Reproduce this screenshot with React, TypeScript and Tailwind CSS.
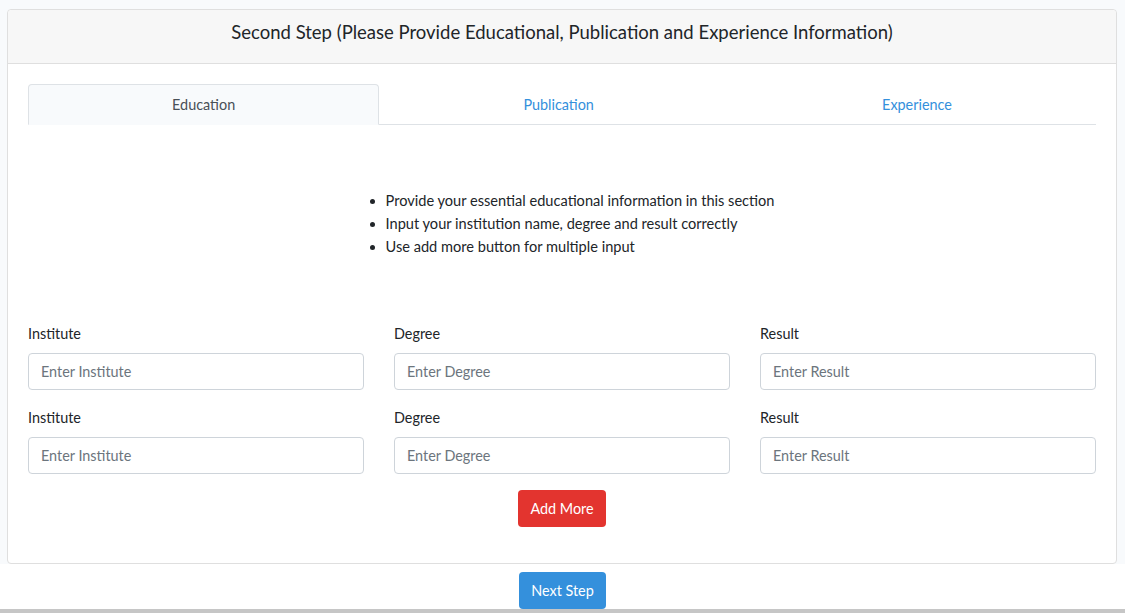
import React from "react";

const font = { fontFamily: "Lato, 'Noto Sans', sans-serif" };

function Field({ label, placeholder }: { label: string; placeholder: string }) {
  return (
    <div className="mb-4">
      <label className="block mb-2 text-[14.4px] leading-[23px] text-[#212529]">{label}</label>
      <input
        className="block w-full h-[37px] px-3 rounded-[4px] border border-[#ced4da] bg-white text-[14.4px] text-[#495057] placeholder:text-[#6c757d] outline-none"
        placeholder={placeholder}
      />
    </div>
  );
}

export default function App() {
  const rows = [0, 1];
  return (
    <div style={font} className="w-[1125px] h-[613px] overflow-hidden bg-white flex flex-col">
      <div className="bg-[#f8fafc] pt-[9px] pl-[7px] pr-[8px]">
        <div className="bg-white border border-[#dfdfdf] rounded-[4px]">
          <div className="h-[54px] bg-[#f7f7f7] border-b border-[#dfdfdf] rounded-t-[4px] flex items-center justify-center text-[18.5px] text-[#212529] pb-[7px]">
            Second Step (Please Provide Educational, Publication and Experience Information)
          </div>
          <div className="p-5">
            <div className="flex border-b border-[#dee2e6] text-[14.4px]">
              <div className="flex-auto h-[41px] -mb-px px-4 flex items-center justify-center border border-[#dee2e6] border-b-[#f8fafc] bg-[#f8fafc] rounded-t-[4px] text-[#495057]">
                Education
              </div>
              <div className="flex-auto h-[41px] -mb-px px-4 flex items-center justify-center border border-transparent text-[#3490dc]">
                Publication
              </div>
              <div className="flex-auto h-[41px] -mb-px px-4 flex items-center justify-center border border-transparent text-[#3490dc]">
                Experience
              </div>
            </div>
            <div className="flex justify-center mt-[64px] mb-[64px]">
              <ul className="list-disc pl-[36px] text-[14.6px] leading-[23px] text-[#212529]">
                <li>Provide your essential educational information in this section</li>
                <li>Input your institution name, degree and result correctly</li>
                <li>Use add more button for multiple input</li>
              </ul>
            </div>
            {rows.map((r) => (
              <div key={r} className="grid grid-cols-3 gap-x-[30px]">
                <Field label="Institute" placeholder="Enter Institute" />
                <Field label="Degree" placeholder="Enter Degree" />
                <Field label="Result" placeholder="Enter Result" />
              </div>
            ))}
            <div className="flex justify-center mb-[16px]">
              <button className="h-[37px] px-3 rounded-[4px] bg-[#e3342f] text-white text-[14.4px]">Add More</button>
            </div>
          </div>
        </div>
      </div>
      <div className="flex justify-center pt-2">
        <button className="h-[37px] px-3 rounded-[4px] bg-[#3490dc] text-white text-[14.4px]">Next Step</button>
      </div>
      <div className="flex-1 bg-[#c6c6c6]" />
    </div>
  );
}
